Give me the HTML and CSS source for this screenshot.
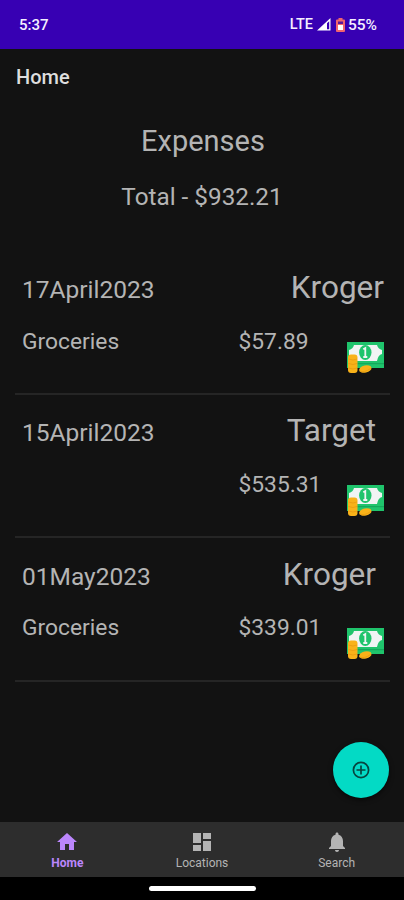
FILE: index.html
```html
<!doctype html>
<html lang="en">
<head>
  <meta charset="utf-8">
  <meta name="viewport" content="width=device-width, initial-scale=1">
  <title>Expenses</title>
  <link rel="stylesheet" href="styles.css">
</head>
<body>

  <!-- shared money icon -->
  <svg class="sprite" width="0" height="0">
    <symbol id="money" viewBox="0 0 38 33">
      <path fill="#1fc46c" d="M1 1h37v26H1z"/>
      <path fill="#f0f4f4" d="M8 4h23q1 4 5 5v4q-4 1-5 7H8q-1-6-5-7V9q4-1 5-5z"/>
      <path fill="#f0f4f4" d="M3 10h6v10H3z"/>
      <path fill="#14a85c" d="M10 22h28v1.200H10z"/>
      <ellipse cx="19.300" cy="11.500" rx="6.200" ry="7.400" fill="#1fc46c"/>
      <path d="M17.300 8.200l2-1.200v9M17.300 16h4" fill="none" stroke="#f0f4f4" stroke-width="1.800"/>
      <rect x="2" y="13.500" width="9.500" height="18.500" rx="3" fill="#f9b219"/>
      <path d="M2.500 18q4.500 2 8.500 0M2.500 22.500q4.500 2 8.500 0M2.500 27q4.500 2 8.500 0" fill="none" stroke="#e99a10" stroke-width=".8"/>
      <ellipse cx="19.300" cy="28" rx="6.300" ry="3.600" transform="rotate(-12 19.300 28)" fill="#f9b219"/>
      <path d="M13.500 30q5 2 11-2.500" fill="none" stroke="#e99a10" stroke-width=".8"/>
    </symbol>
  </svg>

  <div class="status-bar">
    <span class="clock">5:37</span>
    <div class="status-icons">
      <span class="network">LTE</span>
      <svg class="signal" width="14" height="13" viewBox="0 0 14 13">
        <path fill="#fff" d="M0 12.500L13.500 0v12.500z"/>
        <path fill="#3700b3" d="M10 5.200l2.200-2v8.100H10z"/>
      </svg>
      <svg class="battery" width="9" height="14" viewBox="0 0 9 14">
        <path fill="#f0646e" d="M2.500 0h4v1.500H8q1 0 1 1V13q0 1-1 1H1q-1 0-1-1V2.500q0-1 1-1h1.500z"/>
        <path fill="#5d1798" d="M2 3.500h5V6H2z"/>
        <path fill="#fff" d="M2 7h5v5H2z"/>
      </svg>
      <span class="percent">55%</span>
    </div>
  </div>

  <div class="app-bar">Home</div>

  <main class="content">
    <h1 class="title">Expenses</h1>
    <div class="total">Total - $932.21</div>

    <div class="expense-list">
      <div class="expense">
        <div class="expense-top">
          <span class="date">17April2023</span>
          <span class="store store-wide">Kroger</span>
        </div>
        <div class="expense-bottom">
          <span class="category">Groceries</span>
          <span class="amount">$57.89</span>
          <svg class="money"><use href="#money"/></svg>
        </div>
      </div>

      <div class="expense">
        <div class="expense-top">
          <span class="date">15April2023</span>
          <span class="store">Target</span>
        </div>
        <div class="expense-bottom">
          <span class="category"></span>
          <span class="amount">$535.31</span>
          <svg class="money"><use href="#money"/></svg>
        </div>
      </div>

      <div class="expense">
        <div class="expense-top">
          <span class="date">01May2023</span>
          <span class="store">Kroger</span>
        </div>
        <div class="expense-bottom">
          <span class="category">Groceries</span>
          <span class="amount">$339.01</span>
          <svg class="money"><use href="#money"/></svg>
        </div>
      </div>
    </div>

    <button class="fab" aria-label="Add expense">
      <svg width="18" height="18" viewBox="0 0 18 18" fill="none" stroke="#07453f" stroke-width="1.700">
        <circle cx="9" cy="9" r="7.600"/>
        <path d="M9 4.500v9M4.500 9h9"/>
      </svg>
    </button>
  </main>

  <nav class="bottom-nav">
    <div class="nav-item active">
      <svg viewBox="0 0 24 24"><path d="M10 20v-6h4v6h5v-8h3L12 3 2 12h3v8z"/></svg>
      <span>Home</span>
    </div>
    <div class="nav-item">
      <svg viewBox="0 0 24 24"><path d="M3 13h8V3H3v10zm0 8h8v-6H3v6zm10 0h8V11h-8v10zm0-18v6h8V3h-8z"/></svg>
      <span>Locations</span>
    </div>
    <div class="nav-item">
      <svg viewBox="0 0 24 24"><path d="M12 22c1.100 0 2-.9 2-2h-4c0 1.100.9 2 2 2zm6-6v-5c0-3.070-1.640-5.640-4.500-6.320V4c0-.83-.67-1.500-1.500-1.500s-1.500.67-1.500 1.500v.68C7.630 5.360 6 7.920 6 11v5l-2 2v1h16v-1l-2-2z"/></svg>
      <span>Search</span>
    </div>
  </nav>

  <div class="gesture-bar"><div class="handle"></div></div>

</body>
</html>
```

FILE: styles.css
```css
* {
  box-sizing: border-box;
}

body {
  margin: 0;
  height: 900px;
  display: flex;
  flex-direction: column;
  overflow: hidden;
  font-family: Roboto, sans-serif;
  background-color: #121212;
  color: #b4b4b4;
}

.sprite {
  position: absolute;
}

.status-bar {
  height: 49px;
  padding: 0 27px 0 19px;
  display: flex;
  align-items: center;
  justify-content: space-between;
  background-color: #3700b3;
  color: #f4efff;
  font-size: 15px;
  font-weight: 500;
}

.status-icons {
  display: flex;
  align-items: center;
}

.network {
  font-size: 14.5px;
}

.signal {
  margin-left: 4px;
}

.battery {
  margin: 0 3px 0 5px;
}

.percent {
  font-size: 15.5px;
}

.app-bar {
  height: 56px;
  padding-left: 16px;
  line-height: 56px;
  font-size: 20px;
  font-weight: 500;
  color: #dedede;
}

.content {
  position: relative;
  flex: 1;
}

.title {
  margin: 17px 0 0;
  padding-left: 2px;
  line-height: 38px;
  font-size: 29px;
  font-weight: 400;
  text-align: center;
}

.total {
  margin-top: 20px;
  line-height: 34px;
  font-size: 24.3px;
  text-align: center;
}

.expense-list {
  margin: 37.5px 14px 0 15px;
}

.expense {
  height: 143.4px;
  padding: 14px 6px 0 7px;
  border-bottom: 2px solid #252525;
}

.expense-top {
  height: 44px;
  display: flex;
  align-items: center;
  justify-content: space-between;
}

.date {
  padding-top: 4px;
  font-size: 24.5px;
}

.store {
  padding-right: 8px;
  font-size: 31.5px;
}

.store-wide {
  padding-right: 0;
}

.expense-bottom {
  padding-top: 18px;
  display: grid;
  grid-template-columns: 216.5px 107.5px 38px;
  line-height: 28px;
  font-size: 22.8px;
}

.money {
  width: 38px;
  height: 33px;
  margin-top: 13px;
}

.fab {
  position: absolute;
  right: 15px;
  bottom: 24px;
  width: 56px;
  height: 56px;
  padding: 0;
  display: flex;
  align-items: center;
  justify-content: center;
  border: 0;
  border-radius: 50%;
  background-color: #03dac5;
  box-shadow: 0 2px 5px rgba(0, 0, 0, 0.6);
}

.bottom-nav {
  height: 55px;
  display: flex;
  background-color: #2d2d2d;
}

.nav-item {
  flex: 1;
  padding-top: 8px;
  display: flex;
  flex-direction: column;
  align-items: center;
  font-size: 12px;
  line-height: 18px;
}

.nav-item svg {
  width: 24px;
  height: 24px;
  fill: #b4b4b4;
}

.active {
  color: #bb86fc;
  font-weight: 700;
}

.active svg {
  fill: #bb86fc;
}

.gesture-bar {
  height: 23px;
  display: flex;
  align-items: center;
  justify-content: center;
  background-color: #000;
}

.handle {
  width: 107px;
  height: 5px;
  border-radius: 3px;
  background-color: #fff;
}
```
